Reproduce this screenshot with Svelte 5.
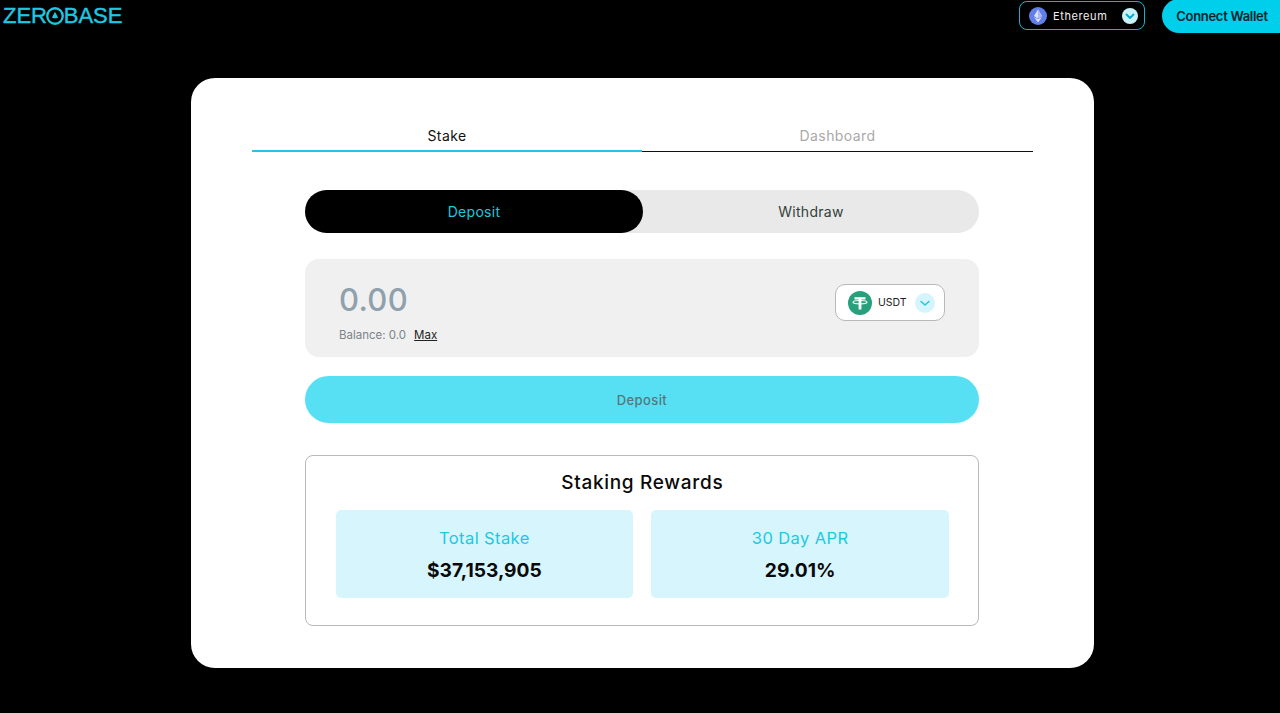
<script>
  const stats = [
    { label: 'Total Stake', value: '$37,153,905' },
    { label: '30 Day APR', value: '29.01%' }
  ];
</script>

<div class="page">
  <header>
    <div class="logo">
      <span>ZER</span>
      <svg class="logo-o" viewBox="0 0 20 20" width="18" height="18" aria-hidden="true">
        <circle cx="10" cy="10" r="8.6" fill="none" stroke="#1ec8e0" stroke-width="2.6" />
        <path d="M10 5.4 L13.4 11.6 Q10 13.6 6.6 11.6 Z" fill="#1ec8e0" />
      </svg>
      <span>BASE</span>
    </div>
    <div class="actions">
      <button class="network">
        <svg viewBox="0 0 18 18" width="18" height="18" aria-hidden="true">
          <circle cx="9" cy="9" r="9" fill="#627eea" />
          <path d="M9 2.4 L5 9.1 L9 11.4 L13 9.1 Z" fill="#dfe4fb" />
          <path d="M9 2.4 V11.4 L13 9.1 Z" fill="#aab8f3" />
          <path d="M5 10 L9 15.6 L13 10 L9 12.3 Z" fill="#dfe4fb" />
        </svg>
        <span class="net-name">Ethereum</span>
        <span class="chev light">
          <svg viewBox="0 0 16 16" width="16" height="16" aria-hidden="true"><path d="M4.5 6.5 L8 10 L11.5 6.5" fill="none" stroke="#00a9cc" stroke-width="1.8" stroke-linecap="round" stroke-linejoin="round" /></svg>
        </span>
      </button>
      <button class="connect">Connect Wallet</button>
    </div>
  </header>

  <main class="card">
    <nav class="tabs">
      <div class="tab active">Stake</div>
      <div class="tab">Dashboard</div>
    </nav>

    <section class="content">
      <div class="switch">
        <div class="seg on">Deposit</div>
        <div class="seg">Withdraw</div>
      </div>

      <div class="amount">
        <div class="left">
          <div class="zero">0.00</div>
          <div class="balance"><span>Balance: 0.0</span><span class="max">Max</span></div>
        </div>
        <button class="token">
          <svg viewBox="0 0 24 24" width="24" height="24" aria-hidden="true">
            <circle cx="12" cy="12" r="12" fill="#26a17b" />
            <path d="M6.5 6.2 H17.5 V8.6 H13.4 V18.4 H10.6 V8.6 H6.5 Z" fill="#fff" />
            <ellipse cx="12" cy="11.2" rx="7" ry="1.7" fill="none" stroke="#fff" stroke-width="1.1" />
          </svg>
          <span class="tok-name">USDT</span>
          <span class="chev pale">
            <svg viewBox="0 0 20 20" width="20" height="20" aria-hidden="true"><path d="M6 8.5 L10 12 L14 8.5" fill="none" stroke="#1ec8e0" stroke-width="1.5" stroke-linecap="round" stroke-linejoin="round" /></svg>
          </span>
        </button>
      </div>

      <button class="submit">Deposit</button>

      <div class="rewards">
        <h2>Staking Rewards</h2>
        <div class="stats">
          {#each stats as s}
            <div class="stat">
              <div class="label">{s.label}</div>
              <div class="value">{s.value}</div>
            </div>
          {/each}
        </div>
      </div>
    </section>
  </main>
</div>

<style>
  :global(body) {
    margin: 0;
    background: #000;
  }
  .page {
    height: 713px;
    background: #000;
    font-family: Inter, "Liberation Sans", sans-serif;
    overflow: hidden;
    display: flex;
    flex-direction: column;
  }
  button {
    font-family: inherit;
    border: none;
    padding: 0;
  }
  header {
    display: flex;
    justify-content: space-between;
    align-items: flex-start;
    height: 78px;
  }
  .logo {
    display: flex;
    align-items: center;
    height: 32px;
    padding-left: 3px;
    color: #1ec8e0;
    font-family: "Liberation Sans", sans-serif;
    font-size: 22px;
    letter-spacing: -0.05px;
    -webkit-text-stroke: 0.4px #1ec8e0;
  }
  .logo-o {
    margin: 0 -0.5px;
  }
  .actions {
    display: flex;
    align-items: flex-start;
    gap: 17px;
  }
  .network {
    margin-top: 1px;
    box-sizing: border-box;
    width: 126px;
    height: 29px;
    border: 1px solid #16b4cc;
    border-radius: 8px;
    background: #000;
    display: flex;
    align-items: center;
    padding: 0 6px 0 9px;
    color: #f2f2f2;
    font-size: 11px;
  }
  .net-name {
    margin-left: 6px;
    letter-spacing: 0.6px;
  }
  .chev {
    margin-left: auto;
    display: flex;
    border-radius: 50%;
  }
  .chev.light {
    background: #c9f1f8;
  }
  .chev.pale {
    background: #d6f4fb;
  }
  .connect {
    width: 118px;
    height: 34px;
    margin-top: -1px;
    border-radius: 17px 0 0 17px;
    background: #00cfec;
    color: #06232b;
    font-size: 13px;
    font-weight: 600;
    letter-spacing: -0.3px;
    white-space: nowrap;
    padding-left: 2px;
  }
  .card {
    box-sizing: border-box;
    width: 903px;
    height: 590px;
    margin-left: 191px;
    background: #fff;
    border-radius: 24px;
    padding: 46px 61px 0;
  }
  .tabs {
    display: flex;
  }
  .tab {
    flex: 1;
    height: 28px;
    box-sizing: border-box;
    text-align: center;
    font-size: 14px;
    line-height: 23px;
    letter-spacing: 0.4px;
    color: #a9a9a9;
    border-bottom: 1px solid #111;
  }
  .tab.active {
    flex: 0 0 390px;
    color: #111;
    border-bottom: 2px solid #1ec8e0;
  }
  .content {
    margin: 38px 54px 0 53px;
    display: flex;
    flex-direction: column;
  }
  .switch {
    display: flex;
    height: 43px;
    border-radius: 22px;
    background: #e9e9e9;
  }
  .seg {
    flex: 1;
    text-align: center;
    line-height: 43px;
    font-size: 14px;
    letter-spacing: 0.3px;
    color: #33413a;
    border-radius: 22px;
  }
  .seg.on {
    flex: 0 0 338px;
    background: #000;
    color: #1ec8e0;
  }
  .amount {
    margin-top: 26px;
    height: 98px;
    box-sizing: border-box;
    background: #f0f0f0;
    border-radius: 14px;
    padding: 0 34px;
    display: flex;
    justify-content: space-between;
    align-items: flex-start;
  }
  .left {
    padding-top: 21px;
  }
  .zero {
    font-size: 31px;
    line-height: 40px;
    font-weight: 500;
    color: #8fa1ad;
    letter-spacing: 0.3px;
  }
  .balance {
    margin-top: 8px;
    display: flex;
    gap: 8px;
    font-size: 11.5px;
    line-height: 15px;
    color: #7d8488;
  }
  .max {
    color: #222;
    text-decoration: underline;
  }
  .token {
    margin-top: 25px;
    box-sizing: border-box;
    width: 110px;
    height: 37px;
    background: #fff;
    border: 1px solid #b8b8b8;
    border-radius: 10px;
    display: flex;
    align-items: center;
    padding: 0 9px 0 12px;
    font-size: 10.5px;
    color: #222;
  }
  .tok-name {
    margin-left: 6px;
  }
  .submit {
    margin-top: 19px;
    height: 47px;
    border-radius: 24px;
    background: #57e0f4;
    color: #55767d;
    font-size: 13px;
    font-weight: 500;
    letter-spacing: 0.4px;
  }
  .rewards {
    margin-top: 32px;
    box-sizing: border-box;
    height: 171px;
    border: 1px solid #b9b9b9;
    border-radius: 8px;
    padding: 0 29px 0 29.5px;
  }
  h2 {
    margin: 15px 0 0;
    height: 24px;
    font-size: 19px;
    line-height: 24px;
    font-weight: 500;
    letter-spacing: 0.7px;
    text-align: center;
    color: #0a0a0a;
  }
  .stats {
    margin-top: 15px;
    display: flex;
    gap: 18px;
  }
  .stat {
    flex: 1;
    height: 88px;
    box-sizing: border-box;
    background: #d7f5fc;
    border-radius: 5px;
    text-align: center;
    padding-top: 17px;
  }
  .label {
    font-size: 16.5px;
    line-height: 22px;
    color: #1ec8e0;
    letter-spacing: 0.4px;
  }
  .value {
    margin-top: 9px;
    font-size: 19.2px;
    line-height: 24px;
    font-weight: 700;
    color: #0a0a0a;
  }
</style>
